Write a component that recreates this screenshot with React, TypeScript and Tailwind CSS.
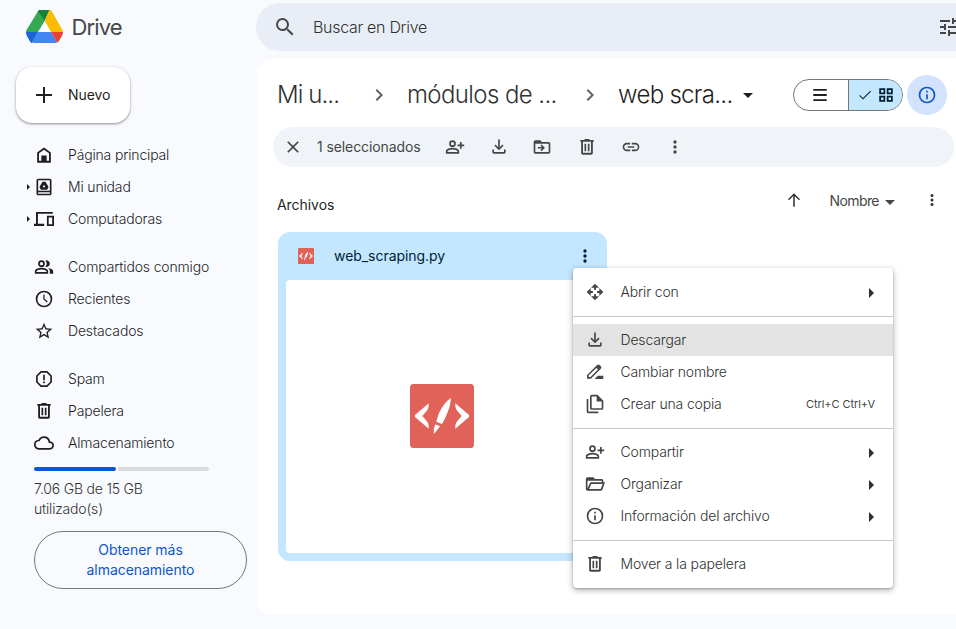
import type { ReactNode } from "react";

type GlyphProps = { d: string; size?: number; className?: string };

function Glyph({ d, size = 20, className = "" }: GlyphProps) {
  return (
    <svg width={size} height={size} viewBox="0 0 24 24" fill="currentColor" className={`shrink-0 ${className}`}>
      <path fillRule="evenodd" d={d} />
    </svg>
  );
}

const paths = {
  search:
    "M15.5 14h-.79l-.28-.27A6.47 6.47 0 0 0 16 9.5 6.5 6.5 0 1 0 9.5 16c1.61 0 3.09-.59 4.23-1.57l.27.28v.79l5 4.99L20.49 19l-4.99-5zm-6 0C7.01 14 5 11.99 5 9.5S7.01 5 9.5 5 14 7.01 14 9.5 11.99 14 9.5 14z",
  tune: "M3 17v2h6v-2H3zM3 5v2h10V5H3zm10 16v-2h8v-2h-8v-2h-2v6h2zM7 9v2H3v2h4v2h2V9H7zm14 4v-2H11v2h10zm-6-4h2V7h4V5h-4V3h-2v6z",
  chevron: "M8.6 16.6 13.2 12 8.6 7.4 10 6l6 6-6 6z",
  close: "M19 6.41 17.59 5 12 10.59 6.41 5 5 6.41 10.59 12 5 17.59 6.41 19 12 13.41 17.59 19 19 17.59 13.41 12z",
  more: "M12 8a2 2 0 1 0 0-4 2 2 0 0 0 0 4zm0 2a2 2 0 1 0 0 4 2 2 0 0 0 0-4zm0 6a2 2 0 1 0 0 4 2 2 0 0 0 0-4z",
  link: "M3.9 12c0-1.71 1.39-3.1 3.1-3.1h4V7H7a5 5 0 0 0 0 10h4v-1.9H7c-1.71 0-3.1-1.39-3.1-3.1zM8 13h8v-2H8v2zm9-6h-4v1.9h4a3.1 3.1 0 0 1 0 6.2h-4V17h4a5 5 0 0 0 0-10z",
  download: "M11 3h2v9.200l3.100-3.100 1.400 1.400L12 16l-5.500-5.500 1.400-1.400 3.100 3.100zM4 15v3c0 1.100.9 2 2 2h12c1.100 0 2-.9 2-2v-3h-2v3H6v-3z",
  trash: "M9 2.500v1H4v2.300h1v13.400c0 1.200.9 2.100 2 2.100h10c1.100 0 2-.9 2-2.100V5.800h1V3.500h-5v-1zM7.200 5.800h9.600V19H7.200zM9 8h2v9H9zM13 8h2v9h-2z",
  info: "M11 7h2v2h-2zm0 4h2v6h-2zM12 2a10 10 0 1 0 0 20 10 10 0 0 0 0-20zm0 18a8 8 0 1 1 0-16 8 8 0 0 1 0 16z",
  personAdd:
    "M9 12a4 4 0 1 0 0-8 4 4 0 0 0 0 8zm0-6a2 2 0 1 1 0 4 2 2 0 0 1 0-4zM9 13c-2.670 0-8 1.340-8 4v3h16v-3c0-2.660-5.330-4-8-4zM3 18v-1c.22-.72 3.310-2 6-2s5.800 1.290 6 2v1zM18 6h2v3h3v2h-3v3h-2v-3h-3V9h3z",
  people:
    "M9 12a4 4 0 1 0 0-8 4 4 0 0 0 0 8zm0-6a2 2 0 1 1 0 4 2 2 0 0 1 0-4zM9 13c-2.670 0-8 1.340-8 4v3h16v-3c0-2.660-5.330-4-8-4zM3 18v-1c.22-.72 3.310-2 6-2s5.800 1.290 6 2v1zM13.700 4.200A4 4 0 1 1 13.700 11.800a6 6 0 0 0 0-7.600zM17 13.300c2.700.5 6 1.700 6 3.700v3h-4v-3c0-1.500-.8-2.700-2-3.700z",
  clock:
    "M12 2a10 10 0 1 0 0 20 10 10 0 0 0 0-20zm0 18a8 8 0 1 1 0-16 8 8 0 0 1 0 16zM11.200 6.500h1.500v5.100l3.800 3.300-1 1.200-4.300-3.700z",
  star: "m22 9.240-7.190-.62L12 2 9.190 8.630 2 9.240l5.460 4.730L5.820 21 12 17.270 18.180 21l-1.630-7.030zM12 15.400l-3.760 2.270 1-4.280-3.320-2.880 4.380-.38L12 6.100l1.710 4.040 4.380.38-3.320 2.880 1 4.280z",
  spam: "M8 2.500h8l5.500 5.500v8L16 21.500H8L2.500 16V8zM8.800 4.500 4.500 8.800v6.400l4.300 4.300h6.400l4.300-4.300V8.800l-4.300-4.300zM11 7h2v6.500h-2zM11 15h2v2h-2z",
  cloud:
    "M19.350 10.040A7.490 7.490 0 0 0 12 4C9.110 4 6.600 5.640 5.350 8.040A5.994 5.994 0 0 0 0 14c0 3.310 2.690 6 6 6h13c2.760 0 5-2.240 5-5 0-2.640-2.050-4.780-4.650-4.960zM19 18H6c-2.210 0-4-1.790-4-4 0-2.050 1.530-3.760 3.560-3.970l1.070-.11.5-.95A5.469 5.469 0 0 1 12 6c2.620 0 4.880 1.860 5.390 4.430l.3 1.500 1.530.11A2.980 2.980 0 0 1 22 15c0 1.650-1.350 3-3 3z",
  home: "M12 3 20.200 9v12.200H3.800V9zM12 5.600 6 10v9h2.800v-6.500h6.400V19H18v-9z",
  devices:
    "M2.400 3.500H22.500v2.200H4.700v12h7.500v2.800H0v-2.800h2.400zM15.500 8H24v12.500h-8.500zM17.600 10.200v8.100h4.200v-8.100z",
  openWith:
    "M12 2l4.800 4.800H13.100V9.500h-2.200V6.800H7.200zM22 12l-4.800 4.800V13.100H14.500v-2.200h2.700V7.200zM12 22l-4.800-4.800h3.700V14.500h2.200v2.700h3.700zM2 12l4.800-4.800v3.700H9.500v2.200H6.800v3.700z",
  folderOpen:
    "M20 6h-8l-2-2H3a2 2 0 0 0-2 2v12a2 2 0 0 0 2 2h16.200c.8 0 1.500-.5 1.800-1.300L24 10H22V8a2 2 0 0 0-2-2zM3 8h17v2H7.500c-.9 0-1.600.5-1.900 1.300L3 17.500zM7.500 12h13.700l-2.400 6H5z",
  folderMove:
    "M20 6h-8l-2-2H4a2 2 0 0 0-2 2v12a2 2 0 0 0 2 2h16a2 2 0 0 0 2-2V8a2 2 0 0 0-2-2zM4 8h16v10H4zM11.500 9l4 4-4 4-1.300-1.300 1.800-1.800H7v-1.800h5l-1.800-1.800z",
  rename:
    "M14.500 3.600 2.500 15.600V20H7l12-12c.9-.9.9-2 0-2.900L17.500 3.600c-.9-.9-2.100-.9-3 0zM13.600 7.200l1.900 1.900L6.600 18H4.500v-2zM15.500 16.500H22V20.500H11.500z",
  copy: "M15 1H8a2 2 0 0 0-2 2v14a2 2 0 0 0 2 2h12a2 2 0 0 0 2-2V8zM8 3h6v6h6v8H8zM4 6H2v15a2 2 0 0 0 2 2h12v-2H4z",
  up: "M11 21V6.800l-5.600 5.600L4 11l8-8 8 8-1.400 1.400L13 6.800V21z",
  grid: "M3 3h8v8H3zM5.300 5.300v3.400h3.400V5.300zM13 3h8v8h-8zM15.300 5.300v3.400h3.400V5.300zM3 13h8v8H3zM5.300 15.300v3.400h3.400v-3.400zM13 13h8v8h-8zM15.300 15.300v3.400h3.400v-3.400z",
  check: "M9 16.600 4.500 12.100l-1.100 1.100L9 18.800 21 6.800l-1.100-1.100z",
  lines: "M3 4h18v2.400H3zM3 10.800h18v2.400H3zM3 17.600h18V20H3z",
  driveBox:
    "M5 2h14a2 2 0 0 1 2 2v16a2 2 0 0 1-2 2H5a2 2 0 0 1-2-2V4c0-1.100.9-2 2-2zM5 4v12.500h14V4zM5 18.300V20h14v-1.700zM10.200 5.800h3.600l3.700 6.200-1.800 3.200H8.300L6.500 12zM12 9.200l-1.700 3h3.400z",
};

function DriveLogo() {
  return (
    <svg width="37" height="33" viewBox="0 0 37 33" className="shrink-0">
      <path fill="#34a853" d="M11.500 2C12 .9 13 .2 14 .1L18.600 11.300 12.200 22.100 0 22.100c0-1 .3-1.700.7-2.400z" />
      <path fill="#188038" d="M14 0h9.500L18.600 11 12.100 1.200C12.500.5 13.200 0 14 0z" />
      <path fill="#fbbc04" d="M23.500 0c1 0 1.900.5 2.400 1.400l10.300 18.100c.4.800.8 1.700.8 2.600l-11.900.1-6.500-11.200z" />
      <path fill="#1967d2" d="M0 22h12.200L6 33c-1-.2-1.500-.8-2-1.500L.8 25.800C.2 24.500 0 23.500 0 22z" />
      <path fill="#4285f4" d="M12.200 22h13L31 32.600c-.6.300-1 .4-1.700.4H7.600c-.6 0-1.100-.1-1.600-.4z" />
      <path fill="#ea4335" d="M25.100 22H37c0 1.400-.3 2.500-.9 3.600l-3.300 5.700c-.4.700-1 1.100-1.700 1.500z" />
      <path fill="#fff" d="M18.600 11.300 25 22H12.200z" />
    </svg>
  );
}

function CodeTile({ size }: { size: number }) {
  return (
    <svg width={size} height={size} viewBox="0 0 64 64" className="shrink-0">
      <rect width="64" height="64" rx="3.500" fill="#e16259" />
      <g fill="#fff">
        <path d="M18.700 19.300 5 31v2l13.700 11.700c.3-3-.4-6-2.500-8.200L12.300 32l3.900-4.500c2.100-2.200 2.800-5.200 2.500-8.200z" />
        <path d="M45.300 19.300 59 31v2L45.300 44.700c-.3-3 .4-6 2.500-8.200l3.900-4.500-3.900-4.500c-2.100-2.200-2.800-5.200-2.500-8.200z" />
        <path d="M40.700 14C41 22 36.500 32 32 40l-5.700-2.300C28.500 28 33 20 40.700 14z" />
        <path d="m25.400 40.300 4.700 2L24 50c-.7-3-.2-6.500 1.400-9.700z" />
      </g>
    </svg>
  );
}

function NavRow({ d, label, expandable = false }: { d: string; label: string; expandable?: boolean }) {
  return (
    <div className="flex h-8 items-center text-[#1f1f1f]">
      <span className="flex w-[34px] justify-end pr-1">
        {expandable && <span className="h-0 w-0 border-y-[3px] border-l-[3px] border-y-transparent border-l-[#1f1f1f]" />}
      </span>
      <Glyph d={d} />
      <span className="ml-3.5 text-sm font-light tracking-[-0.16px]">{label}</span>
    </div>
  );
}

function MenuRow({ d, label, sub = false, hint, active = false }: { d: string; label: string; sub?: boolean; hint?: string; active?: boolean }) {
  return (
    <div className={`flex h-8 items-center pl-3 text-[#444746] ${active ? "bg-[#e3e3e3]" : ""}`}>
      <Glyph d={d} />
      <span className="ml-[15.5px] flex-1 text-sm font-light tracking-[-0.16px] text-[#303231]">{label}</span>
      {hint && <span className="mr-[18px] text-[11px] tracking-[-0.07px]">{hint}</span>}
      {sub && <span className="mr-[19px] mt-px h-0 w-0 border-y-[5px] border-l-[5px] border-y-transparent border-l-[#303030]" />}
    </div>
  );
}

function Divider() {
  return (
    <div className="h-4 pt-2">
      <div className="h-px bg-[#c7c7c7]" />
    </div>
  );
}

function ToolButton({ children }: { children: ReactNode }) {
  return <span className="flex w-11 justify-center">{children}</span>;
}

function Sidebar() {
  return (
    <aside className="flex w-64 shrink-0 flex-col">
      <div className="flex h-[53px] items-center pl-[25.5px]">
        <DriveLogo />
        <span className="ml-[9px] mt-0.5 text-[22px] tracking-[-0.9px] text-[#444746]">Drive</span>
      </div>
      <div className="ml-4 mt-[14px] flex h-14 w-[114px] items-center rounded-2xl bg-white pl-5 text-[#1f1f1f] shadow-[0_1px_3px_rgba(60,64,67,0.3),0_1px_2px_rgba(60,64,67,0.35)]">
        <svg width="16" height="16" viewBox="0 0 16 16" fill="currentColor">
          <path d="M7 0h2v7h7v2H9v7H7V9H0V7h7z" />
        </svg>
        <span className="ml-4 text-sm tracking-[-0.05px]">Nuevo</span>
      </div>
      <nav className="mt-4 flex flex-col gap-4">
        <div>
          <NavRow d={paths.home} label="Página principal" />
          <NavRow d={paths.driveBox} label="Mi unidad" expandable />
          <NavRow d={paths.devices} label="Computadoras" expandable />
        </div>
        <div>
          <NavRow d={paths.people} label="Compartidos conmigo" />
          <NavRow d={paths.clock} label="Recientes" />
          <NavRow d={paths.star} label="Destacados" />
        </div>
        <div>
          <NavRow d={paths.spam} label="Spam" />
          <NavRow d={paths.trash} label="Papelera" />
          <NavRow d={paths.cloud} label="Almacenamiento" />
        </div>
      </nav>
      <div className="ml-[34px] mt-2 flex w-[175px] gap-[2px]">
        <div className="h-1 w-[82px] rounded-full bg-[#0b57d0]" />
        <div className="h-1 flex-1 rounded-r-full bg-[#dadbde]" />
      </div>
      <div className="ml-[34px] mt-2 text-sm font-light leading-5 tracking-[-0.2px] text-[#303231]">
        <div>7.06 GB de 15 GB</div>
        <div>utilizado(s)</div>
      </div>
      <div className="ml-[34px] mt-3 flex h-[58px] w-[213px] flex-col items-center justify-center rounded-full border border-[#747775] text-sm leading-5 tracking-[-0.05px] text-[#0b57d0]">
        <div>Obtener más</div>
        <div>almacenamiento</div>
      </div>
    </aside>
  );
}

function Breadcrumbs() {
  return (
    <div className="flex h-10 items-center text-2xl font-light text-[#303231]">
      <span className="w-[94px] pl-1 tracking-[-0.9px]">Mi u...</span>
      <Glyph d={paths.chevron} size={24} className="text-[#5f6261]" />
      <span className="ml-4 w-[171px] tracking-[-0.6px]">módulos de ...</span>
      <Glyph d={paths.chevron} size={24} className="text-[#5f6261]" />
      <span className="ml-4 w-[125px] tracking-[-0.7px] text-[#1f1f1f]">web scra...</span>
      <span className="h-0 w-0 border-x-[5px] border-t-[5px] border-x-transparent border-t-[#1f1f1f]" />
      <div className="ml-10 flex h-8 w-[110px] overflow-hidden rounded-full border border-[#747775] text-[#1f1f1f]">
        <span className="flex w-[54px] items-center justify-center pr-0.5">
          <Glyph d={paths.lines} size={18} />
        </span>
        <span className="flex flex-1 items-center gap-1 border-l border-[#747775] bg-[#c2e7ff] pl-2 text-[#001d35]">
          <Glyph d={paths.check} size={16} />
          <Glyph d={paths.grid} size={18} />
        </span>
      </div>
      <div className="ml-1 flex h-10 w-10 items-center justify-center rounded-full bg-[#d3e3fd] text-[#0b57d0]">
        <Glyph d={paths.info} />
      </div>
    </div>
  );
}

function Toolbar() {
  return (
    <div className="mt-3 flex h-10 w-[681px] items-center rounded-full bg-[#f0f4f9] pl-2.5 text-[#444746]">
      <Glyph d={paths.close} />
      <span className="ml-3.5 w-[116px] text-sm tracking-[-0.1px]">1 seleccionados</span>
      <ToolButton><Glyph d={paths.personAdd} /></ToolButton>
      <ToolButton><Glyph d={paths.download} /></ToolButton>
      <ToolButton><Glyph d={paths.folderMove} className="mr-0.5" /></ToolButton>
      <ToolButton><Glyph d={paths.trash} /></ToolButton>
      <ToolButton><Glyph d={paths.link} /></ToolButton>
      <ToolButton><Glyph d={paths.more} /></ToolButton>
    </div>
  );
}

function ContextMenu() {
  return (
    <div className="absolute left-[295px] top-9 h-[320px] w-80 rounded bg-white py-2 shadow-[0_2px_6px_rgba(0,0,0,0.32),0_1px_2px_rgba(0,0,0,0.18)]">
      <MenuRow d={paths.openWith} label="Abrir con" sub />
      <Divider />
      <MenuRow d={paths.download} label="Descargar" active />
      <MenuRow d={paths.rename} label="Cambiar nombre" />
      <MenuRow d={paths.copy} label="Crear una copia" hint="Ctrl+C Ctrl+V" />
      <Divider />
      <MenuRow d={paths.personAdd} label="Compartir" sub />
      <MenuRow d={paths.folderOpen} label="Organizar" sub />
      <MenuRow d={paths.info} label="Información del archivo" sub />
      <Divider />
      <MenuRow d={paths.trash} label="Mover a la papelera" />
    </div>
  );
}

function FileCard() {
  return (
    <div className="relative ml-[5px] mt-[15px] h-[329px] w-[329px] rounded-xl bg-[#c2e7ff] px-2 pb-2 text-[#001d35]">
      <div className="flex h-12 items-center pl-3 pr-1">
        <CodeTile size={16} />
        <span className="ml-5 flex-1 text-sm tracking-[-0.05px]">web_scraping.py</span>
        <Glyph d={paths.more} />
      </div>
      <div className="flex h-[273px] items-start justify-center rounded bg-white pr-px pt-[104px]">
        <CodeTile size={64} />
      </div>
      <ContextMenu />
    </div>
  );
}

export default function App() {
  return (
    <div className="flex h-[629px] w-[956px] overflow-hidden bg-[#f9fafe] font-['Inter','Roboto',sans-serif]">
      <Sidebar />
      <div className="flex w-[700px] shrink-0 flex-col pt-[3px]">
        <div className="flex h-12 w-[760px] items-center rounded-l-full bg-[#e9eef6] pl-[17px] text-[#444746]">
          <Glyph d={paths.search} size={24} />
          <span className="ml-4 w-[624px] text-base font-light tracking-[-0.3px] text-[#303231]">Buscar en Drive</span>
          <Glyph d={paths.tune} size={24} />
        </div>
        <main className="ml-px mt-2 h-[556px] rounded-l-2xl bg-white pl-4 pt-4">
          <Breadcrumbs />
          <Toolbar />
          <div className="mt-3.5 flex h-9 items-center pl-1 text-sm">
            <span className="mt-3 w-[508px] tracking-[-0.05px] text-[#1f1f1f]">Archivos</span>
            <Glyph d={paths.up} size={18} className="mt-0.5 text-[#303030]" />
            <span className="ml-[26.5px] mt-[3px] w-[55.5px] tracking-[-0.6px] text-[#444746]">Nombre</span>
            <span className="mt-[6px] h-0 w-0 border-x-[5px] border-t-[5px] border-x-transparent border-t-[#444746]" />
            <Glyph d={paths.more} size={18} className="ml-7 mt-0.5 text-[#303030]" />
          </div>
          <FileCard />
        </main>
      </div>
    </div>
  );
}
